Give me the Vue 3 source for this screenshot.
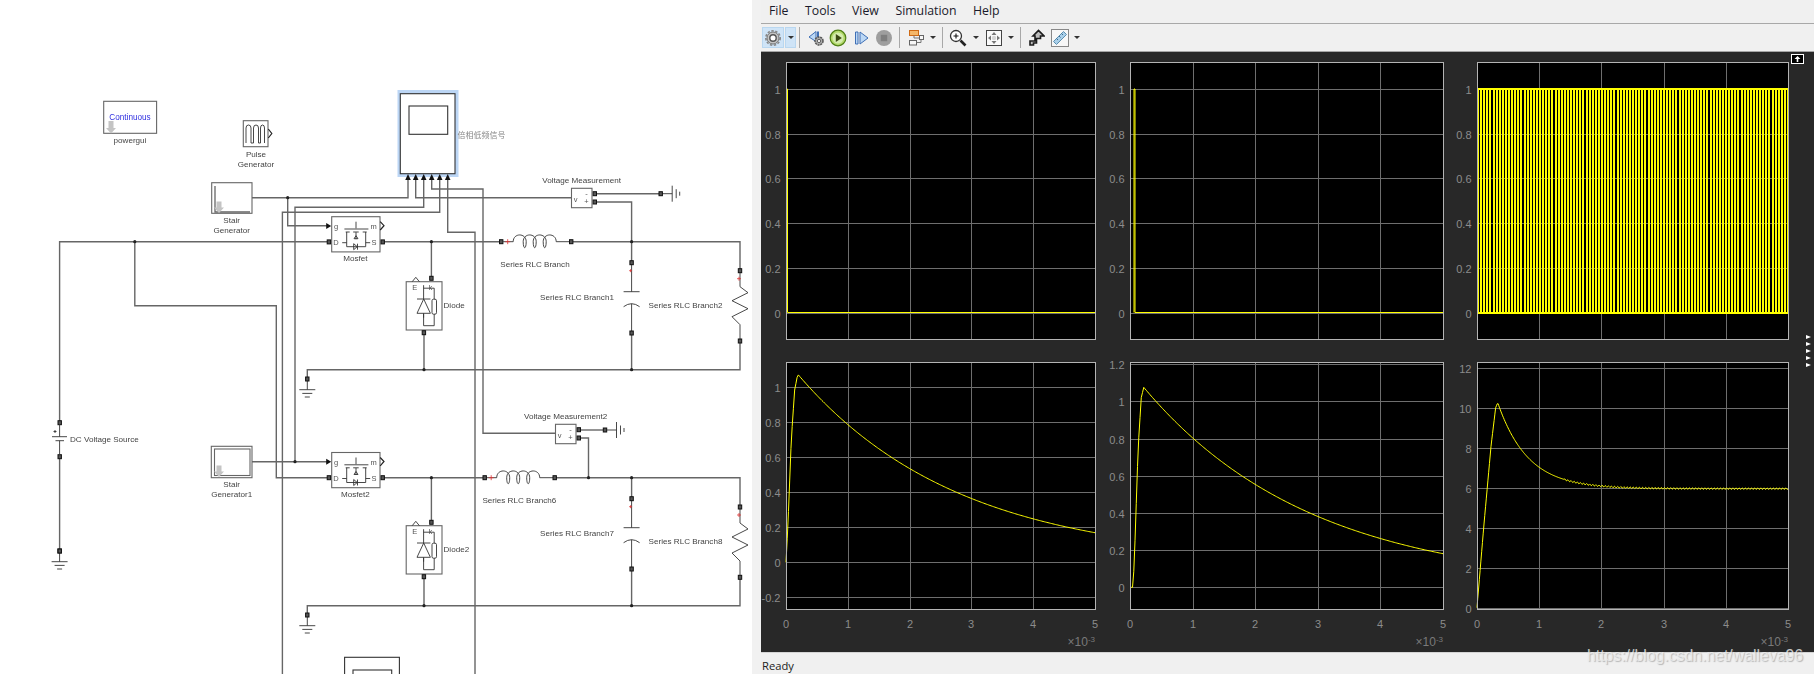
<template>
  <div class="app">
    <div class="schematic">
      <svg class="diagram" width="752" height="674" viewBox="0 0 752 674">
        <!-- wires -->
        <polyline v-for="(w, i) in wires" :key="'w' + i" :points="w" class="wire" />
        <circle v-for="(j, i) in junctions" :key="'j' + i" :cx="j[0]" :cy="j[1]" r="1.6" fill="#222" />

        <!-- powergui -->
        <rect x="103.7" y="101.3" width="52.9" height="32" class="block" />
        <path d="M108.5 121h5v7h2.5l-5 5.5-5-5.5h2.5z" fill="#c4c4c4" />
        <text x="130" y="117" class="lbl blue">Continuous</text>
        <text x="130" y="140.7" class="lbl">powergui</text>

        <!-- pulse generator -->
        <rect x="243.3" y="120.7" width="24.7" height="26" class="block" />
        <path d="M246 143v-15q0-3 2.5-3t2.5 3v15h2.5v-15q0-3 2.5-3t2.5 3v15h2v-15q0-3 2-3t2 3v15" class="sym" />
        <path d="M268.3 129l3.5 4.5-3.5 4.5" class="sym dark" />
        <text x="256" y="154" class="lbl">Pulse</text>
        <text x="256" y="164" class="lbl">Generator</text>

        <!-- scope -->
        <rect x="397.5" y="90" width="61" height="87" fill="#bcd6f5" />
        <rect x="400.3" y="93.7" width="54.7" height="80" class="block dark" />
        <rect x="409" y="106" width="38.7" height="28.3" class="block dark" />
        <path v-for="x in scopePorts" :key="x" :d="`M${x - 2.8} 180h5.6l-2.8-6z`" fill="#111" />
        <text x="457.5" y="134" class="cjk">倍相低频信号</text>

        <!-- stair generators -->
        <rect x="211.7" y="182.7" width="40.3" height="30.6" class="block" />
        <path d="M215 186v26h35" class="sym grey" />
        <path d="M216.5 201.5h5v6h2.5l-5 5.5-5-5.5h2.5z" fill="#c4c4c4" />
        <text x="231.7" y="220.3" class="lbl">Stair</text>
        <text x="231.7" y="230.3" class="lbl">Generator</text>
        <rect x="211.3" y="446.3" width="40.7" height="31.4" class="block" />
        <rect x="214.5" y="449" width="35.5" height="26.5" class="block" />
        <path d="M216.5 465.5h5v6h2.5l-5 5.5-5-5.5h2.5z" fill="#c4c4c4" />
        <text x="231.7" y="484.3" class="lbl">Stair</text>
        <text x="231.7" y="494.3" class="lbl">Generator1</text>

        <!-- mosfets -->
        <g v-for="m in mosfets" :key="m.name" :transform="`translate(331.7 ${m.y})`">
          <rect width="48.3" height="35.2" class="block" />
          <path d="M-5.5 6.2l5 3-5 3z" fill="#111" />
          <path d="M48.5 5l3.8 4-3.8 4.3" class="sym dark" />
          <path d="M24.3 5v6.7M12.7 12.3h24M14 15.3h4M21.5 15.3h5.500M31 15.3h4M15 15.3V30H34V15.3M24.3 19l-2 3h4zM24.3 15.5v7M10.5 26H15M34 26h4.5M22 27l3.5 3-3.5 3zM25.8 27v6" class="sym" />
          <text x="4.3" y="10" class="lbl sm">g</text>
          <text x="42" y="9.5" class="lbl sm">m</text>
          <text x="4.3" y="25.5" class="lbl sm">D</text>
          <text x="42.3" y="25.5" class="lbl sm">S</text>
          <text x="23.6" y="41.6" class="lbl">{{ m.name }}</text>
          <rect x="-4.5" y="23.2" width="3.4" height="4" class="port" />
          <rect x="49.3" y="23.2" width="3.4" height="4" class="port" />
        </g>

        <!-- diodes -->
        <g v-for="d in diodes" :key="d.name" :transform="`translate(406.2 ${d.y})`">
          <rect width="35.8" height="48.3" class="block" />
          <path d="M6 0l3.6-4.4L13.2 0" class="sym" />
          <path d="M17.4 3.5V17.3M17.4 6.5H28V17.5M17.4 32V44H28V32.5M10.8 17.3h13.4M10.8 31.6h13.4L17.5 17.3zM17.4 31.6V36" class="sym" />
          <rect x="25.8" y="17.5" width="4.5" height="15" rx="1.5" class="sym" />
          <text x="8.5" y="5.8" class="lbl sm">E</text>
          <text x="24.3" y="5.8" class="lbl sm">k</text>
          <text x="37.3" y="23.6" class="lbl start">{{ d.name }}</text>
          <rect x="23.5" y="-5.4" width="3.4" height="4" class="port" />
          <rect x="16" y="49" width="3.4" height="4" class="port" />
        </g>

        <!-- series RLC inductors -->
        <g v-for="l in inductors" :key="l.x" :transform="`translate(${l.x} ${l.y})`">
          <path d="M2 0H12c0-9 13-9 13 0c0 8-3 8-3 0c0-9 13-9 13 0c0 8-3 8-3 0c0-9 13-9 13 0c0 8-3 8-3 0c0-9 13-9 13 0H69" class="sym" />
          <path d="M4 0h5M6.5-2.5v5" class="plus" />
          <rect x="-1.7" y="-2" width="3.4" height="4" class="port" />
          <rect x="68.3" y="-2" width="3.4" height="4" class="port" />
        </g>

        <!-- capacitor branches -->
        <g v-for="y in capacitors" :key="y" :transform="`translate(631.6 ${y})`">
          <path d="M0 0V29M-8 29H8M-8 44Q0 38 8 44M0 41V70" class="sym" />
          <path d="M-2.5 8h3M-1 6.5v3" class="plus" />
          <rect x="-1.7" y="-2" width="3.4" height="4" class="port" />
          <rect x="-1.7" y="68.3" width="3.4" height="4" class="port" />
        </g>

        <!-- resistor branches -->
        <g v-for="y in resistors" :key="y" :transform="`translate(740 ${y})`">
          <path d="M0 0V16L8 22-8 30 8 38-8 46 0 54V70" class="sym" />
          <path d="M-3 8h4M-1 6v4" class="plus" />
          <rect x="-1.7" y="-2" width="3.4" height="4" class="port" />
          <rect x="-1.7" y="68.3" width="3.4" height="4" class="port" />
        </g>

        <!-- voltage measurement -->
        <g v-for="v in meters" :key="v.name" :transform="`translate(${v.x} ${v.y})`">
          <rect width="20.5" height="19.4" class="block" />
          <text x="4" y="11" class="lbl sm">v</text>
          <text x="15" y="5.5" class="lbl sm">-</text>
          <text x="15" y="13.5" class="lbl sm">+</text>
          <rect x="21.6" y="3.4" width="3.4" height="4" class="port" />
          <rect x="21.6" y="11.7" width="3.4" height="4" class="port" />
          <text :x="v.lx" y="-8" class="lbl">{{ v.name }}</text>
        </g>

        <!-- grounds -->
        <g v-for="g in grounds" :key="g[1]" :transform="`translate(${g[0]} ${g[1]})`">
          <path d="M0 0V10.7M-8 10.7H8M-5 14.4H5M-2.5 18H2.5" class="sym" />
          <rect x="-1.7" y="-2" width="3.4" height="4" class="port" />
        </g>
        <g v-for="g in sideGrounds" :key="g[0]" :transform="`translate(${g[0]} ${g[1]})`">
          <path d="M0 0H11.5M11.5-8V8M15.5-4.5V4.5M19-2V2" class="sym" />
          <rect x="-1.7" y="-2" width="3.4" height="4" class="port" />
        </g>

        <!-- dc source -->
        <rect x="58" y="420.7" width="3.4" height="4" class="port" />
        <rect x="58" y="454.7" width="3.4" height="4" class="port" />
        <path d="M59.6 424V436.7M52 436.7H67M55.5 440.7H64M59.6 440.7V454" class="sym" />
        <path d="M53.5 431.5h3M55 430v3" class="sym" />
        <rect x="58" y="549" width="3.4" height="4" class="port" />

        <text v-for="t in labels" :key="t.t" :x="t.x" :y="t.y" :class="['lbl', t.a]">{{ t.t }}</text>

        <!-- next block, cut off by the window -->
        <rect x="344.6" y="657.3" width="54.8" height="30" class="block dark" />
        <rect x="353" y="670" width="38.7" height="20" class="block dark" />
      </svg>
    </div>

    <div class="gutter"></div>

    <div class="scope-window">
      <nav class="menu">
        <span v-for="item in menu" :key="item">{{ item }}</span>
      </nav>

      <div class="toolbar">
        <button class="tool gear on" type="button">
          <svg width="18" height="18" viewBox="0 0 18 18">
            <circle cx="9" cy="9" r="7.2" fill="none" stroke="#888" stroke-width="1.6" stroke-dasharray="2.4 1.6" />
            <circle cx="9" cy="9" r="6" fill="#c4c4c4" stroke="#777" />
            <circle cx="9" cy="9" r="3.2" fill="#fff" stroke="#555" stroke-width="1.4" />
          </svg>
        </button>
        <button class="tool caret on" type="button"></button>
        <i class="sep s1"></i>
        <button class="tool w22" type="button">
          <svg width="18" height="18" viewBox="0 0 18 18">
            <path d="M9 2.5L2 8l7 4.5z" fill="#bcd8f5" stroke="#3f6fb5" />
            <path d="M11 2.5v6" stroke="#3f6fb5" stroke-width="2" />
            <circle cx="12" cy="12" r="4" fill="#aaa" stroke="#555" stroke-width="1.5" stroke-dasharray="2 .8" />
            <circle cx="12" cy="12" r="1.6" fill="#fff" stroke="#444" stroke-width=".8" />
          </svg>
        </button>
        <button class="tool w22" type="button">
          <svg width="18" height="18" viewBox="0 0 18 18">
            <circle cx="9" cy="9" r="7.8" fill="#b2d96a" stroke="#4f7f14" stroke-width="1.2" />
            <circle cx="9" cy="9" r="5.5" fill="#d5ecae" />
            <path d="M6.8 5l6 4-6 4z" fill="#3b4a12" />
          </svg>
        </button>
        <button class="tool w24" type="button">
          <svg width="18" height="18" viewBox="0 0 18 18">
            <path d="M3.5 3h2.500v12H3.5z" fill="#bcd8f5" stroke="#3f6fb5" />
            <path d="M8 3l8 6-8 6z" fill="#bcd8f5" stroke="#3f6fb5" />
          </svg>
        </button>
        <button class="tool w22" type="button">
          <svg width="18" height="18" viewBox="0 0 18 18">
            <circle cx="9" cy="9" r="8" fill="#9e9e9e" />
            <rect x="5.8" y="5.8" width="6.4" height="6.4" fill="#7e7e7e" />
          </svg>
        </button>
        <i class="sep s2"></i>
        <button class="tool w22" type="button">
          <svg width="18" height="18" viewBox="0 0 18 18">
            <rect x="2.5" y="1.5" width="9" height="5" fill="#f5b86a" stroke="#cf6a14" />
            <rect x="2.5" y="11.5" width="7" height="4.5" fill="#f7f7f7" stroke="#666" />
            <rect x="12.5" y="6.5" width="4" height="4" fill="#f7f7f7" stroke="#666" />
            <path d="M7 6.5V9h5.5M9.5 13.500H14v-3" fill="none" stroke="#777" />
          </svg>
        </button>
        <button class="tool caret w12" type="button"></button>
        <i class="sep s3"></i>
        <button class="tool w22" type="button">
          <svg width="18" height="18" viewBox="0 0 18 18">
            <circle cx="7" cy="7" r="5.5" fill="#fff" stroke="#333" stroke-width="1.3" />
            <path d="M7 4.5v5M4.5 7h5" stroke="#111" stroke-width="1.1" />
            <path d="M11.5 11.5l5 5" stroke="#222" stroke-width="2.6" />
          </svg>
        </button>
        <button class="tool caret w14" type="button"></button>
        <button class="tool w22" type="button">
          <svg width="18" height="18" viewBox="0 0 18 18">
            <rect x="1.5" y="1.5" width="15" height="15" fill="#fafafa" stroke="#444" />
            <path d="M9 3l2.5 3h-5zM9 15l2.500-3h-5zM3 9l3-2.500v5zM15 9l-3-2.500v5z" fill="#777" />
            <circle cx="9" cy="9" r="2.2" fill="#d6d6d6" />
          </svg>
        </button>
        <button class="tool caret w12" type="button"></button>
        <i class="sep s3"></i>
        <button class="tool w22" type="button">
          <svg width="18" height="18" viewBox="0 0 18 18">
            <path d="M3 16V12h5V7H6l5.5-5.5L17 7h-3.5v2.5h-4v4.500h-3v2z" fill="#bdbdbd" stroke="#1c1c1c" stroke-width="1.6" />
          </svg>
        </button>
        <button class="tool w26" type="button">
          <svg width="18" height="18" viewBox="0 0 18 18">
            <rect x=".5" y=".5" width="17" height="17" fill="#f7f7f7" stroke="#888" />
            <path d="M2.5 12.500l10-10 3 3-10 10z" fill="#a9cfe9" stroke="#5c8fb0" />
            <path d="M5.5 9.500l1.500 1.500M8 7l1.500 1.500M10.500 4.500L12 6" stroke="#3b6f92" />
          </svg>
        </button>
        <button class="tool caret w8" type="button"></button>
      </div>

      <div class="plots">
        <svg v-for="p in plots" :key="p.id" class="plot" :width="p.left + p.w + 30" :height="300">
          <rect :x="p.left" :y="p.top" :width="p.w" :height="p.h" fill="#000" />
          <g class="grid">
            <line v-for="x in p.xs" :key="'gx' + x" :x1="x" :x2="x" :y1="p.top" :y2="p.top + p.h" />
            <line v-for="t in p.ticks" :key="'gy' + t.label" :x1="p.left" :x2="p.left + p.w" :y1="t.y" :y2="t.y" />
          </g>
          <path :d="p.line" class="trace" :class="{ square: p.square }" />
          <rect :x="p.left + .5" :y="p.top + .5" :width="p.w" :height="p.h" class="frame" />
          <text v-for="t in p.ticks" :key="'ty' + t.label" :x="p.left - 5.5" :y="t.y + 4" class="tick end">{{ t.label }}</text>
          <template v-if="p.bottom">
            <text v-for="(x, i) in p.xs" :key="'tx' + i" :x="x" y="276" class="tick mid">{{ i }}</text>
            <text :x="p.left + p.w" y="294" class="tick end exp">×10<tspan dy="-4" font-size="8">-3</tspan></text>
          </template>
        </svg>
      </div>

      <!-- undock button + collapsed layout arrows -->
      <span class="undock"><svg width="13" height="10" viewBox="0 0 13 10"><rect x=".5" y=".5" width="12" height="9" fill="#000" stroke="#fff" /><path d="M6.5 2l3 3H7.3v3H5.7V5H3.5z" fill="#fff" /></svg></span>
      <div class="arrows"><i v-for="n in 5" :key="n"></i></div>

      <footer class="status">Ready</footer>
      <span class="watermark">https://blog.csdn.net/walleva96</span>
    </div>
  </div>
</template>

<script setup>
const menu = ['File', 'Tools', 'View', 'Simulation', 'Help']

const wires = [
  '252,197.7 408,197.7 408,180',
  '571.5,197.7 415.7,197.7 415.7,180',
  '423.7,180 423.7,207.3 295,207.3 295,461.7',
  '439.7,180 439.7,212.3 282.4,212.3 282.4,674',
  '431.7,180 431.7,189 483,189 483,433.3 555.5,433.3',
  '447.7,180 447.7,232.3 475,232.3 475,674',
  '287.7,197.7 287.7,225.7 327,225.7',
  '329,241.7 59.6,241.7 59.6,422.7',
  '134.8,241.7 134.8,305.7 276.3,305.7 276.3,477.7 329,477.7',
  '59.6,456.7 59.6,551',
  '384,241.7 501,241.7',
  '431.4,241.7 431.4,278',
  '571,241.7 740,241.7 740,270.7',
  '597,202 631.6,202 631.6,262.7',
  '597,193.7 660,193.7',
  '740,341 740,369.7 307.3,369.7 307.3,379',
  '424,333 424,369.7',
  '631.6,333 631.6,369.7',
  '252,461.7 327,461.7',
  '384,477.7 484.7,477.7',
  '431.4,477.7 431.4,522.7',
  '555,477.7 740,477.7 740,507',
  '631.6,477.7 631.6,498.7',
  '581,438 588.5,438 588.5,477.7',
  '581,430 605,430',
  '740,577 740,605.7 307.3,605.7 307.3,615',
  '424,576.7 424,605.7',
  '631.6,569 631.6,605.7',
]

const junctions = [
  [287.7, 197.7], [134.8, 241.7], [431.4, 241.7], [631.6, 241.7],
  [424, 369.7], [631.6, 369.7], [295, 461.7], [431.4, 477.7],
  [588.5, 477.7], [631.6, 477.7], [424, 605.7], [631.6, 605.7],
]

const scopePorts = [408, 415.7, 423.7, 431.7, 439.7, 447.7]
const mosfets = [{ name: 'Mosfet', y: 216.7 }, { name: 'Mosfet2', y: 452.5 }]
const diodes = [{ name: 'Diode', y: 281.7 }, { name: 'Diode2', y: 525.7 }]
const inductors = [{ x: 501.2, y: 241.7 }, { x: 484.7, y: 477.7 }]
const capacitors = [262.7, 498.7]
const resistors = [270.7, 507]
const meters = [
  { name: 'Voltage Measurement', x: 571.5, y: 188.3, lx: 10.2 },
  { name: 'Voltage Measurement2', x: 555.5, y: 424.3, lx: 10.2 },
]
const grounds = [[59.6, 551], [307.3, 379], [307.3, 615]]
const sideGrounds = [[660.7, 193.7], [605, 430]]

const labels = [
  { t: 'DC Voltage Source', x: 70, y: 439.3, a: 'start' },
  { t: 'Series RLC Branch', x: 535, y: 264.3 },
  { t: 'Series RLC Branch1', x: 577, y: 297 },
  { t: 'Series RLC Branch2', x: 685.5, y: 305.3 },
  { t: 'Series RLC Branch6', x: 519.3, y: 500.3 },
  { t: 'Series RLC Branch7', x: 577, y: 533 },
  { t: 'Series RLC Branch8', x: 685.5, y: 541 },
]

// piecewise rise, then the given decay
function curve(rise, decay) {
  return (x) => {
    const end = rise[rise.length - 1]
    if (x >= end[0]) return decay(x)
    for (let i = 1; i < rise.length; i++) {
      if (x <= rise[i][0]) {
        const [x0, y0] = rise[i - 1]
        const [x1, y1] = rise[i]
        return y0 + ((y1 - y0) * (x - x0)) / (x1 - x0)
      }
    }
    return 0
  }
}

function makeLine(fn, left, w, y0, scale, step = 0.02) {
  let d = ''
  for (let x = 0; x <= 5.0001; x += step) {
    d += `${d ? 'L' : 'M'}${(left + (x / 5) * w).toFixed(2)} ${(y0 - fn(x) * scale).toFixed(2)}`
  }
  return d
}

// PWM too fast for the axes: 2px bars with the occasional wider gap
function squareLine(left, w, y0, scale) {
  const pitch = w / 100
  const hi = y0 - scale
  let d = `M${left} ${hi}H${left + w}M${left} ${y0}H${left + w}`
  for (let i = 0; i <= 100; i++) {
    const x = Math.round(left + i * pitch)
    d += `M${x} ${hi}V${y0}`
  }
  return d
}

function buildPlot({ id, left, w, top, h, y0, scale, ticks, bottom, line, square }) {
  const fmt = (v) => String(Math.round(v * 10) / 10)
  return {
    id,
    left,
    w,
    top,
    h,
    bottom,
    square,
    line,
    xs: [0, 1, 2, 3, 4, 5].map((i) => Math.round(left + (i / 5) * w)),
    ticks: ticks.map((v) => ({ label: fmt(v), y: Math.round(y0 - v * scale) + 0.5 })),
  }
}

const unit = [0, 0.2, 0.4, 0.6, 0.8, 1]
const Y0 = 260.5
const SC = 223.5

const curve4 = curve(
  [[0, 0], [0.03, 0.2], [0.086, 0.7], [0.14, 0.98], [0.19, 1.07]],
  (x) => 1.07 * Math.exp(-(x - 0.19) / 2.6),
)
const curve5 = curve(
  [[0, 0], [0.05, 0], [0.08, 0.25], [0.13, 0.75], [0.18, 1.02], [0.22, 1.075]],
  (x) => 1.075 * Math.exp(-(x - 0.22) / 2.68),
)
const curve6 = curve(
  [[0, 0], [0.11, 4.1], [0.226, 8.1], [0.3, 10], [0.333, 10.25]],
  (x) => {
    const ripple = x > 1.4 ? 0.04 * Math.sin(x * 125.6) : 0
    return 5.95 + 4.3 * Math.exp(-(x - 0.333) / 0.48) + ripple
  },
)

const plots = [
  buildPlot({
    id: 1, left: 25, w: 309, top: 10, h: 277, y0: Y0, scale: SC, ticks: unit,
    line: `M25.5 ${Y0}V${Y0 - SC}H26.5V${Y0}H334`,
  }),
  buildPlot({
    id: 2, left: 25, w: 313, top: 10, h: 277, y0: Y0, scale: SC, ticks: unit,
    line: `M29 ${Y0}V${Y0 - SC}H30V${Y0}H338`,
  }),
  buildPlot({
    id: 3, left: 25, w: 311, top: 10, h: 277, y0: Y0, scale: SC, ticks: unit,
    line: squareLine(26, 310, Y0, SC), square: true,
  }),
  buildPlot({
    id: 4, left: 25, w: 309, top: 10, h: 247, y0: 210.3, scale: 175.8, bottom: true,
    ticks: [-0.2, ...unit],
    line: makeLine(curve4, 25, 309, 210.3, 175.8),
  }),
  buildPlot({
    id: 5, left: 25, w: 313, top: 10, h: 247, y0: 235.3, scale: 186, bottom: true,
    ticks: [...unit, 1.2],
    line: makeLine(curve5, 25, 313, 235.3, 186),
  }),
  buildPlot({
    id: 6, left: 25, w: 311, top: 10, h: 247, y0: 255.7, scale: 20, bottom: true,
    ticks: [0, 2, 4, 6, 8, 10, 12],
    line: makeLine(curve6, 25, 311, 255.7, 20, 0.0125),
  }),
]
</script>

<style>
html,
body {
  margin: 0;
  background: #f0f0f0;
}
</style>

<style scoped>
.app {
  display: flex;
  width: 1814px;
  height: 674px;
  overflow: hidden;
}

.schematic {
  width: 752px;
  height: 674px;
  background: #fff;
  flex: none;
}

.diagram {
  display: block;
  filter: blur(0.35px);
}

.gutter {
  width: 9px;
  flex: none;
  background: #f1f1f1;
}

.wire {
  fill: none;
  stroke: #666;
  stroke-width: 1.4;
}

.block {
  fill: #fff;
  stroke: #666;
  stroke-width: 1.1;
}

.block.dark {
  stroke: #333;
  fill: #fff;
}

.sym {
  fill: none;
  stroke: #333;
  stroke-width: 0.9;
}

.sym.dark {
  stroke: #222;
  stroke-width: 1.2;
}

.sym.grey {
  stroke: #666;
  stroke-width: 1.3;
}

.plus {
  fill: none;
  stroke: #d33;
  stroke-width: 0.8;
}

.port {
  fill: #555;
  stroke: #111;
  stroke-width: 1;
}

.lbl {
  font-family: "Liberation Sans", Arial, sans-serif;
  font-size: 8.1px;
  fill: #444;
  text-anchor: middle;
  dominant-baseline: central;
}

.lbl.start {
  text-anchor: start;
}

.lbl.sm {
  font-size: 7.5px;
  fill: #555;
}

.lbl.blue {
  font-size: 8.2px;
  fill: #3030e0;
}

.cjk {
  font-family: "Noto Sans CJK SC", sans-serif;
  font-size: 8px;
  fill: #888;
  dominant-baseline: central;
}

.scope-window {
  position: relative;
  flex: 1;
  min-width: 0;
  display: flex;
  flex-direction: column;
  background: #282828;
}

.menu {
  height: 24px;
  flex: none;
  box-sizing: border-box;
  display: flex;
  align-items: center;
  gap: 16.5px;
  padding: 0 0 2px 8px;
  background: #f0f0f0;
  border-bottom: 1px solid #a8a8a8;
  font-family: "Open Sans", "Liberation Sans", sans-serif;
  font-size: 12.3px;
  color: #1a1a2a;
}

.toolbar {
  height: 28px;
  flex: none;
  box-sizing: border-box;
  display: flex;
  align-items: center;
  padding-left: 1px;
  background: #f0f0f0;
  border-bottom: 1px solid #a5a5a5;
}

.tool {
  height: 21px;
  padding: 0;
  border: 1px solid transparent;
  background: none;
  display: flex;
  align-items: center;
  justify-content: center;
  flex: none;
  box-sizing: border-box;
}

.tool.on {
  background: #cfe4f7;
  border-color: #b9d7f0;
}

.gear,
.w22 {
  width: 22px;
}

.w24 {
  width: 24px;
}

.w26 {
  width: 26px;
}

.caret {
  width: 11px;
}

.caret.on {
  margin-left: 1px;
}

.caret.w12 {
  width: 12px;
}

.caret.w14 {
  width: 14px;
}

.caret.w8 {
  width: 8px;
}

.caret::after {
  content: "";
  border-left: 3px solid transparent;
  border-right: 3px solid transparent;
  border-top: 3px solid #333;
}

.sep {
  width: 1px;
  height: 21px;
  background: #a8a8a8;
  flex: none;
}

.s1 {
  margin: 0 5px 0 3px;
}

.s2 {
  margin: 0 5px 0 4px;
}

.s3 {
  margin: 0 4px 0 3px;
}

.plots {
  flex: 1;
  min-height: 0;
  display: grid;
  grid-template-columns: 344px 347px 1fr;
  grid-template-rows: 300px 300px;
}

.plot {
  display: block;
}

.grid line {
  stroke: #6e6e6e;
  stroke-width: 1;
  shape-rendering: crispEdges;
}

.frame {
  fill: none;
  stroke: #b4b4b4;
  shape-rendering: crispEdges;
}

.trace {
  fill: none;
  stroke: #ffff00;
  stroke-width: 1;
}

.trace.square {
  stroke-width: 2;
  shape-rendering: crispEdges;
}

.tick {
  font-family: "Liberation Sans", Arial, sans-serif;
  font-size: 11px;
  fill: #8c8c8c;
}

.tick.end {
  text-anchor: end;
}

.tick.mid {
  text-anchor: middle;
}

.tick.exp {
  font-size: 12px;
  fill: #7a7a7a;
}

.undock {
  position: absolute;
  left: 1030px;
  top: 54px;
  line-height: 0;
}

.arrows {
  position: absolute;
  left: 1045px;
  top: 335px;
  display: flex;
  flex-direction: column;
  gap: 3px;
}

.arrows i {
  width: 0;
  height: 0;
  border-left: 5px solid #fff;
  border-top: 2.5px solid transparent;
  border-bottom: 2.5px solid transparent;
}

.status {
  height: 22px;
  flex: none;
  box-sizing: border-box;
  padding: 6px 0 0 1px;
  background: #f0f0f0;
  border-top: 1px solid #d4d4d4;
  font-family: "Open Sans", "Liberation Sans", sans-serif;
  font-size: 11.2px;
  line-height: 14px;
  color: #222;
}

.watermark {
  position: absolute;
  right: 11px;
  top: 646.5px;
  font-family: "Liberation Sans", Arial, sans-serif;
  font-size: 15.8px;
  line-height: 18px;
  color: rgba(238, 238, 238, 0.8);
  text-shadow: 1px 1px 1px rgba(110, 110, 110, 0.45);
}
</style>
